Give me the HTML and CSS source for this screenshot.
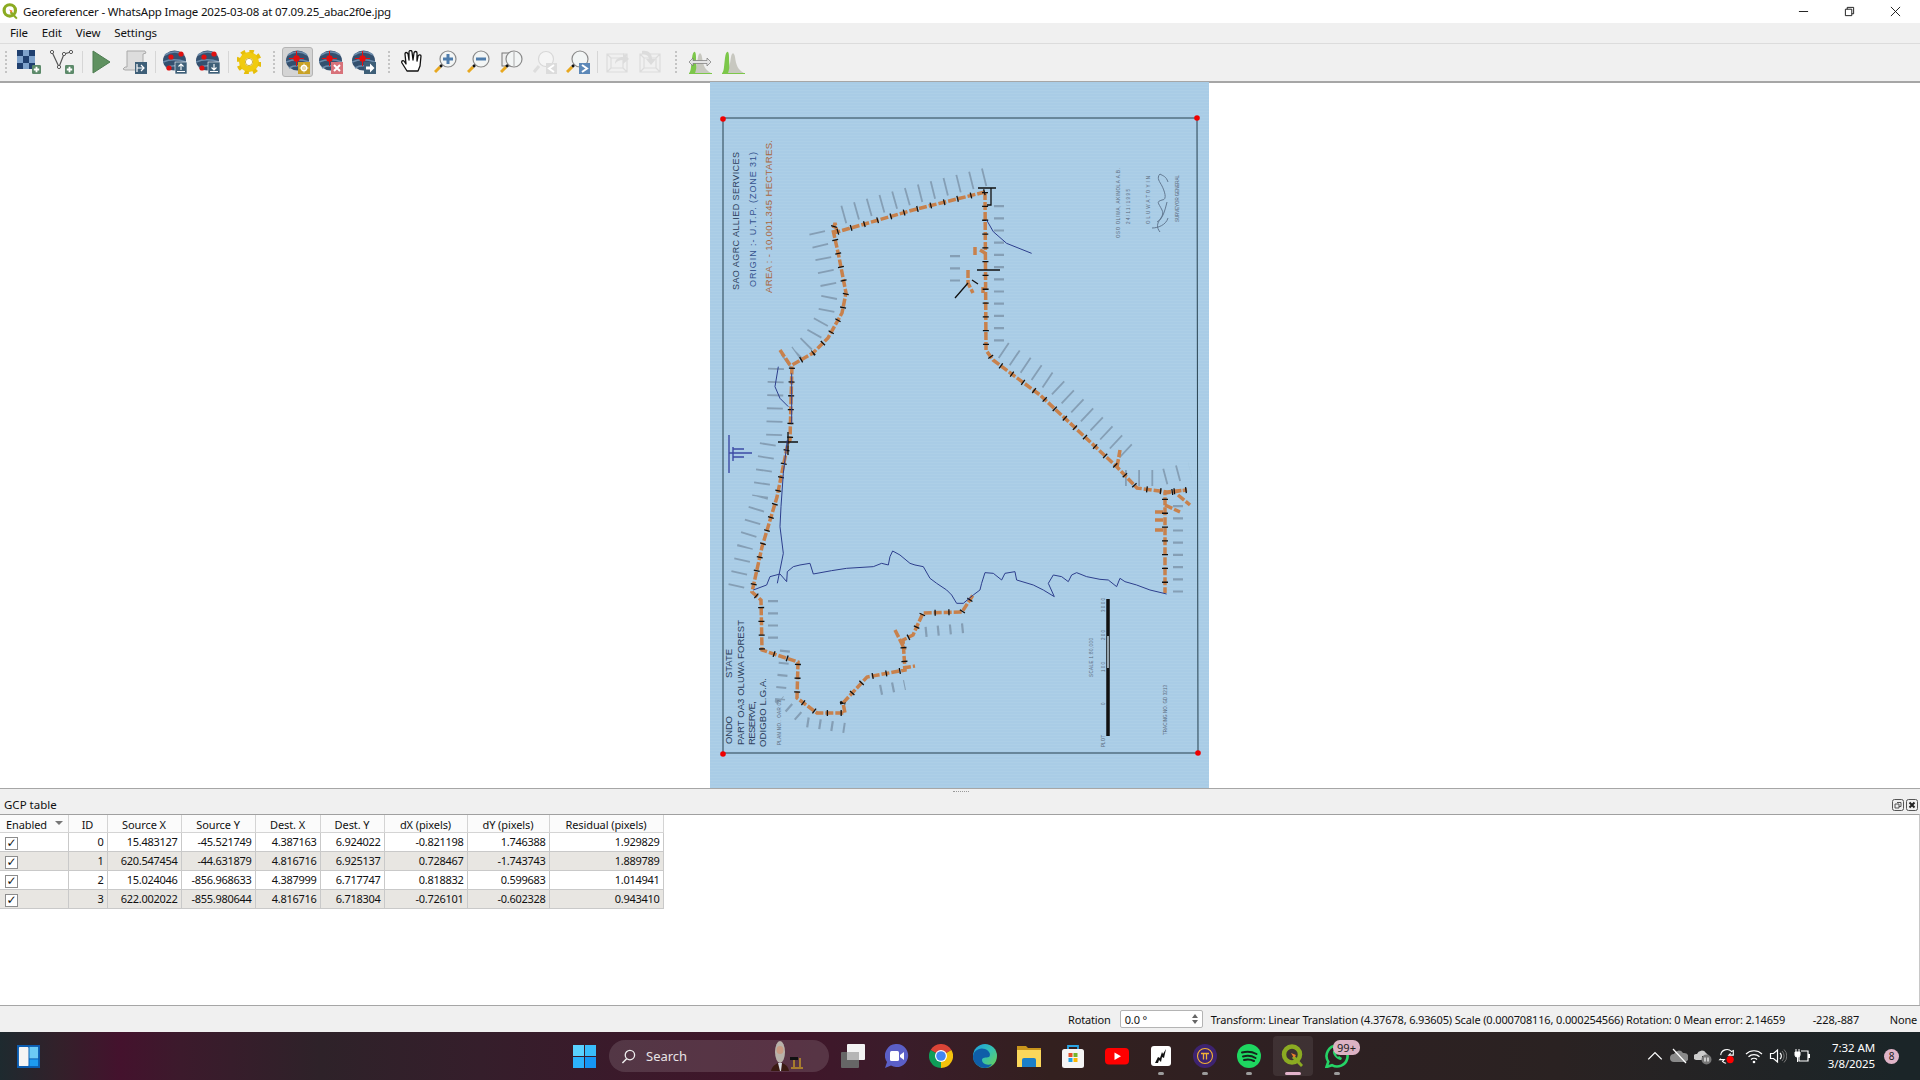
FILE: index.html
```html
<!DOCTYPE html>
<html lang="en">
<head>
    <meta charset="UTF-8">
    <title>Georeferencer - WhatsApp Image 2025-03-08 at 07.09.25_abac2f0e.jpg</title>
    <link rel="stylesheet" href="styles.css">
</head>
<body>

    <svg class="defs" width="0" height="0">
        <defs>
            <symbol id="i-badge-plus" viewBox="0 0 10 10">
                <rect width="10" height="10" rx="1.5" fill="#5c8a6a"/>
                <path d="M5 2v6M2 5h6" stroke="#fff" stroke-width="2"/>
            </symbol>
            <symbol id="i-raster" viewBox="0 0 24 24">
                <rect x="0" y="0" width="18" height="19" fill="#7ea2cc"/>
                <path d="M0 0h6v6H0zM12 0h6v6h-6zM6 6h6v7H6zM0 13h6v6H0zM12 13h6v6h-6z" fill="#1f3f6f"/>
                <use href="#i-badge-plus" x="15" y="15" width="9" height="9"/>
            </symbol>
            <symbol id="i-vector" viewBox="0 0 24 24">
                <path d="M2 2l7 15 5-13 7-2" fill="none" stroke="#555" stroke-width="1.2"/>
                <circle cx="2" cy="2" r="1.6" fill="#fff" stroke="#555"/>
                <circle cx="9" cy="17" r="1.6" fill="#fff" stroke="#555"/>
                <circle cx="14" cy="4" r="1.6" fill="#fff" stroke="#555"/>
                <circle cx="21" cy="2" r="1.6" fill="#fff" stroke="#555"/>
                <use href="#i-badge-plus" x="15" y="15" width="9" height="9"/>
            </symbol>
            <symbol id="i-play" viewBox="0 0 24 24">
                <path d="M3 1l17 11L3 23z" fill="#5f9160" stroke="#4d7c50"/>
            </symbol>
            <symbol id="i-script" viewBox="0 0 24 24">
                <path d="M4 1h18l1 2-3 1v16H2l-2-1 2-2h2z" fill="#ddd" stroke="#aaa"/>
                <rect x="12" y="12" width="12" height="12" fill="#3e5f78"/>
                <path d="M14 18h7m-3-3l3 3-3 3M14 14v8" fill="none" stroke="#fff" stroke-width="1.2"/>
            </symbol>
            <symbol id="i-globe" viewBox="0 0 24 24">
                <ellipse cx="11.5" cy="10.5" rx="11.5" ry="10" fill="#34506f"/>
                <path d="M2 5c6-4 14-4 19 0M0 12c7-3 15-3 23 0M3 18c5-3 12-3 17 0" fill="none" stroke="#6d8cab" stroke-width="1.6"/>
            </symbol>
            <symbol id="i-gcp-up" viewBox="0 0 24 24">
                <use href="#i-globe" width="24" height="24"/>
                <circle cx="8" cy="7" r="2.6" fill="#e01010"/>
                <circle cx="18" cy="4" r="2.6" fill="#e01010"/>
                <circle cx="6" cy="18" r="2.6" fill="#e01010"/>
                <rect x="12" y="12" width="12" height="12" fill="#3e5f78" stroke="#fff" stroke-width=".6"/>
                <path d="M18 20v-6m-2.500 2.500l2.500-2.500 2.500 2.500M14 21.500h8" fill="none" stroke="#fff" stroke-width="1.100"/>
            </symbol>
            <symbol id="i-gcp-down" viewBox="0 0 24 24">
                <use href="#i-globe" width="24" height="24"/>
                <circle cx="8" cy="7" r="2.6" fill="#e01010"/>
                <circle cx="18" cy="4" r="2.6" fill="#e01010"/>
                <circle cx="6" cy="18" r="2.6" fill="#e01010"/>
                <rect x="12" y="12" width="12" height="12" fill="#3e5f78" stroke="#fff" stroke-width=".6"/>
                <path d="M18 14v6m-2.500-2.500l2.500 2.500 2.500-2.500M14 21.500h8" fill="none" stroke="#fff" stroke-width="1.100"/>
            </symbol>
            <symbol id="i-gear" viewBox="0 0 24 24">
                <circle cx="12" cy="12" r="7" fill="none" stroke="#f0cb10" stroke-width="6"/>
                <circle cx="12" cy="12" r="11" fill="none" stroke="#e6be0a" stroke-width="3.500" stroke-dasharray="4.500 4.140"/>
                <circle cx="12" cy="12" r="3.600" fill="#fff" stroke="#c49c08" stroke-width=".8"/>
            </symbol>
            <symbol id="i-target" viewBox="0 0 24 24">
                <use href="#i-globe" width="24" height="24"/>
                <circle cx="10.500" cy="8.500" r="3.200" fill="#e01010"/>
                <path d="M10.500 1v15M3 8.500h15" stroke="#e01010" stroke-width="1"/>
            </symbol>
            <symbol id="i-target-add" viewBox="0 0 24 24">
                <use href="#i-target" width="24" height="24"/>
                <rect x="12" y="12" width="12" height="12" fill="#c9a227"/>
                <circle cx="18" cy="18" r="2.600" fill="none" stroke="#fff" stroke-width="1.500"/>
                <path d="M18 13.500v9M13.500 18h9" stroke="#fff" stroke-width=".8"/>
            </symbol>
            <symbol id="i-target-del" viewBox="0 0 24 24">
                <use href="#i-target" width="24" height="24"/>
                <rect x="12" y="12" width="12" height="12" fill="#d8727a"/>
                <path d="M15 15l6 6m0-6l-6 6" stroke="#fff" stroke-width="2"/>
            </symbol>
            <symbol id="i-target-move" viewBox="0 0 24 24">
                <use href="#i-target" width="24" height="24"/>
                <rect x="12" y="12" width="12" height="12" fill="#3e5f78"/>
                <path d="M14 16.500h4v-3l4.500 4.500-4.500 4.500v-3h-4z" fill="#fff"/>
            </symbol>
            <symbol id="i-hand" viewBox="0 0 24 24">
                <path d="M6 21L1 13c-1-2 1-3 2-2l2 3-1-10c0-2 2-2 3 0l1 6 0-8c0-2 3-2 3 0l1 8 1-7c0-2 3-2 3 0l0 8 1-5c1-2 3-1 3 0l-1 10-2 5z" fill="#fff" stroke="#111" stroke-width="1.300" stroke-linejoin="round"/>
            </symbol>
            <symbol id="i-lens" viewBox="0 0 24 24">
                <circle cx="14" cy="9" r="8" fill="#f2f5f5" stroke="#8a8a8a" stroke-width="1.200"/>
                <path d="M8 15l-2 2" stroke="#111" stroke-width="2.500"/>
                <path d="M6 17l-5 5" stroke="#e8a820" stroke-width="3"/>
            </symbol>
            <symbol id="i-zoom-in" viewBox="0 0 24 24">
                <use href="#i-lens" width="24" height="24"/>
                <path d="M14 4v10M9 9h10" stroke="#4e7cac" stroke-width="3"/>
            </symbol>
            <symbol id="i-zoom-out" viewBox="0 0 24 24">
                <use href="#i-lens" width="24" height="24"/>
                <path d="M9 9h10" stroke="#4e7cac" stroke-width="3"/>
            </symbol>
            <symbol id="i-zoom-layer" viewBox="0 0 24 24">
                <rect x="2" y="3" width="11" height="13" fill="#eee" stroke="#777"/>
                <use href="#i-lens" width="24" height="24"/>
                <path d="M14 2v14" stroke="#aaa"/>
            </symbol>
            <symbol id="i-zoom-last" viewBox="0 0 24 24">
                <circle cx="13" cy="9" r="7.500" fill="#f5f5f5" stroke="#d8d8d8" stroke-width="1.200"/>
                <path d="M6 16l-5 6" stroke="#ddd" stroke-width="3"/>
                <rect x="13" y="13" width="11" height="11" fill="#dcdcdc"/>
                <path d="M21 15l-5 3.500 5 3.500" fill="none" stroke="#fff" stroke-width="2"/>
            </symbol>
            <symbol id="i-zoom-next" viewBox="0 0 24 24">
                <use href="#i-lens" width="24" height="24"/>
                <rect x="13" y="13" width="11" height="11" fill="#5c88b8"/>
                <path d="M16 15l5 3.500-5 3.500" fill="none" stroke="#fff" stroke-width="2"/>
            </symbol>
            <symbol id="i-rotate" viewBox="0 0 24 24">
                <path d="M1 4h20v18H1zM5 8h12v10H5zM1 4l4 4M21 4l-4 4M1 22l4-4M21 22l-4-4" fill="none" stroke="#dcdcdc" stroke-width="1.200"/>
                <path d="M9 14c0-5 4-7 8-7V3l6 6-6 5v-4c-4 0-6 1-8 4z" fill="#dcdcdc"/>
            </symbol>
            <symbol id="i-rotate-down" viewBox="0 0 24 24">
                <path d="M1 4h20v18H1zM5 8h12v10H5zM1 4l4 4M21 4l-4 4M1 22l4-4M21 22l-4-4" fill="none" stroke="#dcdcdc" stroke-width="1.200"/>
                <path d="M3 1c6-1 10 2 10 8h4l-5 6-5-6h3c0-3-3-5-7-5z" fill="#dcdcdc"/>
            </symbol>
            <symbol id="i-hist" viewBox="0 0 24 24">
                <path d="M1 23c2-1 2-7 3-15 1-8 4-8 4-1 0 8 1 14 3 16z" fill="#7cc74a"/>
                <path d="M7 23c1-2 2-10 3-16 1-5 3-5 4 0 1 8 3 13 9 16z" fill="#c8c8c0"/>
                <path d="M1 23.500h23" stroke="#7cc74a"/>
            </symbol>
            <symbol id="i-hist-stretch" viewBox="0 0 24 24">
                <use href="#i-hist" width="24" height="24"/>
                <path d="M1 12l4-4v2.500h14V8l4 4-4 4v-2.500H5V16z" fill="#e4e4e4" stroke="#777" stroke-width=".7"/>
            </symbol>
            <symbol id="i-qgis" viewBox="0 0 24 24">
                <circle cx="11" cy="10.500" r="8" fill="none" stroke="#8bab22" stroke-width="4.500"/>
                <path d="M13 11l9 10-2 2-9-9z" fill="#8bab22"/>
                <path d="M10 9l5 2-2 3z" fill="#ee7d2e"/>
            </symbol>
            <pattern id="paper" width="4" height="3" patternUnits="userSpaceOnUse">
                <rect width="4" height="1" fill="#ffffff" fill-opacity=".05"/>
            </pattern>
            <linearGradient id="edge-g" x1="0" y1="0" x2="1" y2="1">
                <stop offset="0" stop-color="#1b9de2"/>
                <stop offset=".5" stop-color="#35c1b1"/>
                <stop offset="1" stop-color="#6fd14c"/>
            </linearGradient>
        </defs>
    </svg>

    <div class="titlebar">
        <svg class="app-icon" viewBox="0 0 24 24"><use href="#i-qgis"/></svg>
        <span class="title-text">Georeferencer - WhatsApp Image 2025-03-08 at 07.09.25_abac2f0e.jpg</span>
        <div class="win-controls">
            <span class="win-btn"><svg viewBox="0 0 12 12" class="win-ico"><path d="M1 6h10"/></svg></span>
            <span class="win-btn"><svg viewBox="0 0 12 12" class="win-ico"><path d="M1.500 3.500h7v7h-7zM3.500 3.500v-2h7v7h-2"/></svg></span>
            <span class="win-btn"><svg viewBox="0 0 12 12" class="win-ico"><path d="M1 1l10 10M11 1L1 11"/></svg></span>
        </div>
    </div>

    <div class="menubar">
        <span class="menu-item">File</span>
        <span class="menu-item">Edit</span>
        <span class="menu-item">View</span>
        <span class="menu-item">Settings</span>
    </div>

    <div class="toolbar">
        <span class="handle handle-first"></span>
        <span class="tool"><svg><use href="#i-raster"/></svg></span>
        <span class="tool"><svg><use href="#i-vector"/></svg></span>
        <span class="sep"></span>
        <span class="tool"><svg><use href="#i-play"/></svg></span>
        <span class="tool"><svg><use href="#i-script"/></svg></span>
        <span class="sep"></span>
        <span class="tool"><svg><use href="#i-gcp-up"/></svg></span>
        <span class="tool"><svg><use href="#i-gcp-down"/></svg></span>
        <span class="sep"></span>
        <span class="tool"><svg><use href="#i-gear"/></svg></span>
        <span class="handle"></span>
        <span class="tool active"><svg><use href="#i-target-add"/></svg></span>
        <span class="tool"><svg><use href="#i-target-del"/></svg></span>
        <span class="tool"><svg><use href="#i-target-move"/></svg></span>
        <span class="handle"></span>
        <span class="tool"><svg><use href="#i-hand"/></svg></span>
        <span class="tool"><svg><use href="#i-zoom-in"/></svg></span>
        <span class="tool"><svg><use href="#i-zoom-out"/></svg></span>
        <span class="tool"><svg><use href="#i-zoom-layer"/></svg></span>
        <span class="tool"><svg><use href="#i-zoom-last"/></svg></span>
        <span class="tool"><svg><use href="#i-zoom-next"/></svg></span>
        <span class="sep"></span>
        <span class="tool"><svg><use href="#i-rotate"/></svg></span>
        <span class="tool"><svg><use href="#i-rotate-down"/></svg></span>
        <span class="handle"></span>
        <span class="tool"><svg><use href="#i-hist-stretch"/></svg></span>
        <span class="tool"><svg><use href="#i-hist"/></svg></span>
    </div>

    <div class="canvas">
        <svg class="map" viewBox="0 82 1920 706">
            <rect class="paper" x="710" y="82" width="499" height="706"/>
            <rect x="710" y="82" width="499" height="706" fill="url(#paper)"/>
            <path class="frame" d="M723 118H1197L1198 753H723z"/>

            <!-- labels next to the boundary -->
            <polyline class="labels l18" points="985,177 913,195 842,215"/>
            <polyline class="labels l16" points="817,232 823,257 830,293 826,313 812,338 797,353 780,365"/>
            <polyline class="labels l16" points="776,368 774,440 768,443 760,497 745,547 735,592"/>
            <polyline class="labels l10" points="999,205 999,350"/>
            <polyline class="labels l18" points="1003,350 1055,385 1130,455"/>
            <polyline class="labels l16" points="1125,478 1160,478 1190,470"/>
            <polyline class="labels l10" points="773,600 773,640"/>
            <polyline class="labels l10" points="785,650 780,700 805,722 845,728"/>
            <polyline class="labels l10" points="880,690 905,685"/>
            <polyline class="labels l10" points="925,632 965,628"/>
            <polyline class="labels l10" points="1178,505 1178,593"/>
            <polyline class="labels l10" points="955,255 955,285"/>

            <!-- boundary -->
            <polyline class="bound" points="985,192 913,210 837,232 835,223 833,230 839,257 846,293 842,313 828,338 813,353 792,365 790,440 788,443 777,497 762,547 752,592 761,600 762,650 798,662 797,698 817,713 845,713 843,703 867,677 905,670 903,640 913,635 923,613 962,612 973,595"/>
            <polyline class="bound" points="985,192 986,350 993,360 1040,395 1117,467 1137,488 1167,492 1187,490 1165,493 1165,593"/>
            <polyline class="bound" points="975,247 975,257"/>
            <polyline class="bound" points="980,250 985,253"/>
            <polyline class="bound" points="968,270 968,283 973,293"/>
            <polyline class="bound" points="983,287 983,293"/>
            <polyline class="bound" points="895,630 905,650"/>
            <polyline class="bound" points="903,668 915,666"/>
            <polyline class="bound" points="1155,512 1165,512"/>
            <polyline class="bound" points="1155,520 1165,520"/>
            <polyline class="bound" points="1155,530 1165,530"/>
            <polyline class="bound" points="1165,505 1180,512"/>
            <polyline class="bound" points="1178,495 1190,505"/>
            <polyline class="bound" points="1117,467 1120,450"/>
            <polyline class="bound" points="780,350 790,365"/>
            <polyline class="ticks" points="985,192 913,210 837,232 835,223 833,230 839,257 846,293 842,313 828,338 813,353 792,365 790,440 788,443 777,497 762,547 752,592 761,600 762,650 798,662 797,698 817,713 845,713 843,703 867,677 905,670 903,640 913,635 923,613 962,612 973,595"/>
            <polyline class="ticks" points="985,192 986,350 993,360 1040,395 1117,467 1137,488 1167,492 1187,490 1165,493 1165,593"/>
            <path class="ink" d="M978 188H996M991 188V205H987M778 442H798M788 432V455M977 270H1000M972 280L978 284M968 283L955 298"/>

            <!-- rivers, traced at 3x -->
            <g transform="translate(700 440) scale(.3333)">
                <polyline class="river" points="1400,462 1350,450 1310,435 1275,425 1260,415 1250,440 1225,420 1200,418 1160,410 1130,398 1115,405 1105,425 1085,410 1060,405 1045,430 1063,470 1030,450 1000,435 950,420 945,395 915,400 905,420 880,400 855,398 845,430 840,450 820,465 790,490 770,490 755,465 740,450 710,430 690,415 670,380 645,375 630,370 600,345 578,333 570,350 565,375 545,370 520,380 440,385 395,392 340,402 330,370 300,375 280,380 262,395 260,425 240,402 210,410 200,435 160,450"/>
                <polyline class="river" points="262,0 250,100 243,200 240,260 250,340 232,430"/>
                <polyline class="river" points="275,-200 275,-50"/>
                <polyline class="river" points="235,-220 225,-160 240,-125 265,-100"/>
                <polyline class="river" points="860,-660 880,-625 920,-590 995,-560"/>
            </g>

            <!-- sheet text -->
            <text class="sheet t-navy" transform="translate(739 290) rotate(-90)" textLength="138">SAO AGRC ALLIED SERVICES</text>
            <text class="sheet t-blue" transform="translate(756 287) rotate(-90)" textLength="135">ORIGIN :- U.T.P. (ZONE 31)</text>
            <text class="sheet t-brown" transform="translate(772 293) rotate(-90)" textLength="153">AREA : - 10,001.345 HECTARES.</text>
            <text class="sheet-big t-navy" transform="translate(732 744) rotate(-90)" textLength="28">ONDO</text>
            <text class="sheet-big t-navy" transform="translate(732 678) rotate(-90)" textLength="29">STATE</text>
            <text class="sheet-big t-navy" transform="translate(744 745) rotate(-90)" textLength="125">PART OA3 OLUWA FOREST</text>
            <text class="sheet-big t-navy" transform="translate(755 745) rotate(-90)" textLength="44">RESERVE,</text>
            <text class="sheet-big t-navy" transform="translate(766 747) rotate(-90)" textLength="69">ODIGBO L.G.A.</text>
            <text class="sheet-small" transform="translate(781 745) rotate(-90)" textLength="45">PLAN NO.: OAR 02</text>
            <text class="sheet-small" transform="translate(1093 677) rotate(-90)" textLength="39">SCALE 1:80,000</text>
            <text class="sheet-small" transform="translate(1167 735) rotate(-90)" textLength="50">TRACING NO. GD 3213</text>
            <text class="sheet-small" transform="translate(1105 612) rotate(-90)" textLength="14">3000</text>
            <text class="sheet-small" transform="translate(1105 640) rotate(-90)" textLength="10">200</text>
            <text class="sheet-small" transform="translate(1105 672) rotate(-90)" textLength="10">100</text>
            <text class="sheet-small" transform="translate(1105 705) rotate(-90)" textLength="4">0</text>
            <text class="sheet-small" transform="translate(1105 747) rotate(-90)" textLength="12">PLOT</text>
            <text class="sheet-small" transform="translate(1120 238) rotate(-90)" textLength="70">OSO OLIWA, AKINOLA A.B.</text>
            <text class="sheet-small" transform="translate(1130 224) rotate(-90)" textLength="35">24/11/1995</text>
            <text class="sheet-small" transform="translate(1150 224) rotate(-90)" textLength="48">OLUWATOYIN</text>
            <text class="sheet-small" transform="translate(1179 222) rotate(-90)" textLength="47">SURVEYOR GENERAL</text>
            <path class="sign" d="M1160 232c-8-10 6-14 2-22s-6-8 0-10c6 0 2-10 0-14s-6-8-2-12c3 2 6 2 8 8M1157 222c6-3 8-12 10-20M1152 228c6 0 14-3 16-10"/>

            <!-- north arrow, scale bar -->
            <path class="north" d="M729 435V473M729 453H752M733 449H744M733 457H744M733 447V461"/>
            <path class="scale-bar" d="M1108 599V736"/>
            <path class="scale-gap" d="M1108 636V668"/>

            <circle class="gcp" cx="723" cy="119" r="2.800"/>
            <circle class="gcp" cx="1197" cy="118" r="2.800"/>
            <circle class="gcp" cx="723" cy="754" r="2.800"/>
            <circle class="gcp" cx="1198" cy="753" r="2.800"/>
        </svg>
    </div>

    <div class="dock">
        <div class="dock-title">
            <span>GCP table</span>
            <span class="grip"></span>
            <div class="dock-btns">
                <svg class="dock-ico" viewBox="0 0 12 12"><rect x=".5" y=".5" width="11" height="11" rx="2"/><path d="M5 3.500h4v4H7M3 5h4v4H3z"/></svg>
                <svg class="dock-ico" viewBox="0 0 12 12"><rect x=".5" y=".5" width="11" height="11" rx="2"/><path class="dock-x" d="M3.500 3.500l5 5m0-5l-5 5"/></svg>
            </div>
        </div>
        <div class="table-wrap">
            <table class="gcp-table">
                <colgroup>
                    <col class="c-en"><col class="c-id"><col class="c-sx"><col class="c-sy"><col class="c-dx"><col class="c-dy"><col class="c-px"><col class="c-py"><col class="c-res">
                </colgroup>
                <thead>
                    <tr>
                        <th class="th-enabled"><span class="th-inner">Enabled<i class="sort"></i></span></th>
                        <th>ID</th><th>Source X</th><th>Source Y</th><th>Dest. X</th><th>Dest. Y</th><th>dX (pixels)</th><th>dY (pixels)</th><th>Residual (pixels)</th>
                    </tr>
                </thead>
                <tbody>
                    <tr>
                        <td class="chk"><span class="checkbox">&#10003;</span></td>
                        <td>0</td><td>15.483127</td><td>-45.521749</td><td>4.387163</td><td>6.924022</td><td>-0.821198</td><td>1.746388</td><td>1.929829</td>
                    </tr>
                    <tr>
                        <td class="chk"><span class="checkbox">&#10003;</span></td>
                        <td>1</td><td>620.547454</td><td>-44.631879</td><td>4.816716</td><td>6.925137</td><td>0.728467</td><td>-1.743743</td><td>1.889789</td>
                    </tr>
                    <tr>
                        <td class="chk"><span class="checkbox">&#10003;</span></td>
                        <td>2</td><td>15.024046</td><td>-856.968633</td><td>4.387999</td><td>6.717747</td><td>0.818832</td><td>0.599683</td><td>1.014941</td>
                    </tr>
                    <tr>
                        <td class="chk"><span class="checkbox">&#10003;</span></td>
                        <td>3</td><td>622.002022</td><td>-855.980644</td><td>4.816716</td><td>6.718304</td><td>-0.726101</td><td>-0.602328</td><td>0.943410</td>
                    </tr>
                </tbody>
            </table>
        </div>
    </div>

    <div class="statusbar">
        <span class="st-rot">Rotation</span>
        <span class="spin"><span class="spin-val">0.0 °</span><span class="spin-arrows"><i class="up"></i><i class="down"></i></span></span>
        <span class="st-msg">Transform: Linear Translation (4.37678, 6.93605) Scale (0.000708116, 0.000254566) Rotation: 0 Mean error: 2.14659</span>
        <span class="st-coord">-228,-887</span>
        <span class="st-none">None</span>
    </div>

    <div class="taskbar">
        <span class="widgets"><svg viewBox="0 0 24 24"><rect width="24" height="24" fill="#0a5cb0"/><rect x="2" y="2" width="10" height="20" rx="1" fill="#f4f4f4"/><rect x="13" y="2" width="9" height="12" fill="#6ccbf5"/><rect x="13" y="15" width="9" height="7" fill="#1d9bf0"/></svg></span>

        <span class="start"><svg viewBox="0 0 24 24"><path d="M0 0h11.500v11.500H0z" fill="#59d2ff"/><path d="M12.500 0H24v11.500H12.500z" fill="#39bdfb"/><path d="M0 12.500h11.500V24H0z" fill="#2cb2fb"/><path d="M12.500 12.500H24V24H12.500z" fill="#1596f5"/></svg></span>

        <span class="search">
            <svg class="search-ico" viewBox="0 0 16 16"><circle cx="9.500" cy="6.500" r="5" fill="none" stroke="#eee" stroke-width="1.400"/><path d="M6 10.500L1.500 15" stroke="#eee" stroke-width="1.600"/></svg>
            <span class="search-text">Search</span>
            <svg class="search-art" viewBox="0 0 32 32">
                <path d="M0 31c1-5 5-7 7-8h4c3 1 6 3 7 8z" fill="#3a1a12"/>
                <path d="M7 23l2 8h1l1-8z" fill="#d8dbe4"/>
                <ellipse cx="9" cy="12" rx="5" ry="11" fill="#b8b2aa"/>
                <ellipse cx="9" cy="10" rx="3.500" ry="4" fill="#c99c84"/>
                <path d="M20 27h12v2H20zM22 20h2v7h-2zM28 18h2v9h-2z" fill="#a67c2e"/>
                <path d="M19 17h8v3h-8z" fill="#111"/>
            </svg>
        </span>

        <div class="apps">
            <span class="app"><svg viewBox="0 0 24 24"><rect x="0" y="8" width="18" height="16" rx="1" fill="#666"/><rect x="6" y="0" width="18" height="16" rx="1" fill="#f2f2f2"/><rect x="6" y="8" width="12" height="8" fill="#b5b5b5"/></svg></span>
            <span class="app"><svg viewBox="0 0 24 24"><path d="M12 0a11.500 11.500 0 1 1-6 21.500L0 24l2-6A11.500 11.500 0 0 1 12 0z" fill="#5b5fc7"/><rect x="5" y="7" width="9" height="10" rx="1.500" fill="#fff"/><path d="M15 11l4-3v8l-4-3z" fill="#fff"/></svg></span>
            <span class="app"><svg viewBox="0 0 24 24"><path d="M12 12L1.600 6A12 12 0 0 1 22.400 6z" fill="#db4437"/><path d="M12 12L22.400 6A12 12 0 0 1 12 24z" fill="#f4c20d"/><path d="M12 12L12 24A12 12 0 0 1 1.600 6z" fill="#0f9d58"/><circle cx="12" cy="12" r="6" fill="#fff"/><circle cx="12" cy="12" r="4.800" fill="#4285f4"/></svg></span>
            <span class="app"><svg viewBox="0 0 24 24"><circle cx="12" cy="12" r="12" fill="url(#edge-g)"/><path d="M0 13C0 7 6 3 12 5c5 2 6 6 4 8-3 1-7 0-7 3s4 6 10 4c-2 3-5 4-7 4-6 0-12-5-12-11z" fill="#0f5ea8"/></svg></span>
            <span class="app"><svg viewBox="0 0 24 24"><path d="M0 2h9l2 2h13v19H0z" fill="#c9951c"/><path d="M0 6h24v17H0z" fill="#fbd75b"/><path d="M7 14h10a2 2 0 0 1 2 2v7H5v-7a2 2 0 0 1 2-2z" fill="#1b7fc9"/></svg></span>
            <span class="app"><svg viewBox="0 0 24 24"><path d="M7 6V2h10v4" fill="none" stroke="#2aa6e6" stroke-width="1.800"/><rect x="1" y="5" width="22" height="19" rx="2.500" fill="#f5f5f5"/><rect x="7.500" y="9" width="4" height="4" fill="#e5502a"/><rect x="12.500" y="9" width="4" height="4" fill="#74b52d"/><rect x="7.500" y="14" width="4" height="4" fill="#1ea1e8"/><rect x="12.500" y="14" width="4" height="4" fill="#fbb800"/></svg></span>
            <span class="app"><svg viewBox="0 0 24 24"><rect y="4" width="24" height="16.500" rx="4" fill="#f00"/><path d="M9.500 8.500l6.500 3.700-6.500 3.700z" fill="#fff"/></svg></span>
            <span class="app running"><svg viewBox="0 0 24 24"><rect x="2" y="2" width="20" height="20" rx="3" fill="#fff"/><path d="M6 19l3-6 2 1 2-6 1 2 3-5-2 9-2-1-1 5-2-2-1 3z" fill="#111"/></svg></span>
            <span class="app running"><svg viewBox="0 0 24 24"><circle cx="12" cy="12" r="12" fill="#3d2370"/><circle cx="12" cy="12" r="7.500" fill="none" stroke="#f2b134" stroke-width="1.100"/><path d="M8 9.500h8M10.500 9.500v6M13.500 9.500v6" fill="none" stroke="#f2b134" stroke-width="1.300"/></svg></span>
            <span class="app running"><svg viewBox="0 0 24 24"><circle cx="12" cy="12" r="12" fill="#1ed760"/><path d="M5 8.500c5-1.500 10-1 14.500 1.500M6 12.500c4-1 9-.7 12.500 1.500M7 16c3.500-1 7-.6 10 1" fill="none" stroke="#15241c" stroke-width="2" stroke-linecap="round"/></svg></span>
            <span class="app current"><svg viewBox="0 0 24 24"><use href="#i-qgis"/></svg></span>
            <span class="app running"><svg viewBox="0 0 24 24"><path d="M12 1.500a10.500 10.500 0 1 1-5 19.700L1.500 23l1.800-5.200A10.500 10.500 0 0 1 12 1.500z" fill="none" stroke="#25d366" stroke-width="2.600"/><path d="M8 7c-1 3 4 9 8 9l1-2-3-2-1 1-2-2 1-1-2-3z" fill="#25d366"/></svg><span class="app-badge">99+</span></span>
        </div>

        <div class="tray">
            <span class="tray-item"><svg viewBox="0 0 16 16"><path class="tray-line" d="M2 11l6-6 6 6"/></svg></span>
            <span class="tray-item"><svg viewBox="0 0 18 18"><path d="M4 15a4 4 0 0 1 0-8 5 5 0 0 1 9-1 4.500 4.500 0 0 1 2 9z" fill="#8a8a8a"/><path class="tray-line" d="M3 2l13 14"/></svg></span>
            <span class="tray-item"><svg viewBox="0 0 18 18"><path d="M2 13a3 3 0 0 1 1-6 5 5 0 0 1 9-1 3.500 3.500 0 0 1 2 3H8v4z" fill="#ccc"/><circle cx="12.500" cy="12.500" r="5" fill="#777"/><path d="M11 10.500v4M14 10.500v4" stroke="#fff" stroke-width="1.200"/></svg></span>
            <span class="tray-item"><svg viewBox="0 0 20 20"><path class="tray-line" d="M3 9a7 7 0 0 1 12-4l2-1v5h-5l2-2M3 13l-1 1 5 0-2 2c1 1 2 2 4 2"/><circle cx="13.500" cy="14" r="4" fill="#f00"/></svg></span>
            <span class="tray-item tray-wifi"><svg viewBox="0 0 18 18"><path class="tray-line" d="M1 7a11.500 11.500 0 0 1 16 0M3.500 9.800a8 8 0 0 1 11 0M6 12.500a4.300 4.300 0 0 1 6 0"/><circle cx="9" cy="15" r="1.300" fill="#fff"/></svg></span>
            <span class="tray-item"><svg viewBox="0 0 18 18"><path class="tray-line" d="M1.500 6.500h3l4-3.500v12l-4-3.500h-3z"/><path class="tray-line" d="M11 6a4 4 0 0 1 0 6"/><path class="tray-dim" d="M13 4a7 7 0 0 1 0 10M15 2.500a9 9 0 0 1 0 13"/></svg></span>
            <span class="tray-item"><svg viewBox="0 0 18 18"><path class="tray-line" d="M8 4h7v10H6V9"/><path d="M15 7h2v4h-2z" fill="#fff"/><path d="M2 5h5v3a2 2 0 0 1-2 2H4a2 2 0 0 1-2-2zM3 2v3M6 2v3M4.500 10v5" fill="#fff" stroke="#fff"/></svg></span>
        </div>

        <div class="clock">
            <span>7:32 AM</span>
            <span>3/8/2025</span>
        </div>
        <span class="notif">8</span>
    </div>

</body>
</html>
```

FILE: styles.css
```css
html, body {
    margin: 0;
    height: 100%;
}
body {
    width: 1920px;
    height: 1080px;
    display: flex;
    flex-direction: column;
    overflow: hidden;
    font-family: "Noto Sans", "Open Sans", sans-serif;
    font-size: 11px;
    color: #111;
    background: #f0f0f0;
}
.defs {
    position: absolute;
}

/* title bar */
.titlebar {
    height: 23px;
    display: flex;
    align-items: center;
    background: #fff;
    padding-left: 2px;
    flex: none;
}
.app-icon {
    width: 17px;
    height: 17px;
}
.title-text {
    margin-left: 4px;
    font-size: 11.500px;
    letter-spacing: -0.19px;
    white-space: nowrap;
}
.win-controls {
    margin-left: auto;
    margin-right: 2px;
    display: flex;
}
.win-btn {
    width: 46px;
    height: 23px;
    display: flex;
    align-items: center;
    justify-content: center;
}
.win-ico {
    width: 11px;
    height: 11px;
    fill: none;
    stroke: #111;
    stroke-width: 1;
}

/* menu */
.menubar {
    height: 18px;
    padding-bottom: 2px;
    flex: none;
    display: flex;
    align-items: center;
    gap: 14px;
    padding-left: 10px;
    background: #f0f0f0;
    font-size: 11.500px;
    letter-spacing: -0.15px;
}

/* toolbar */
.toolbar {
    height: 36px;
    padding-bottom: 1px;
    flex: none;
    display: flex;
    align-items: center;
    background: #f0f0f0;
    border-top: 1px solid #dcdcdc;
    border-bottom: 1px solid #a6a6a6;
}
.tool {
    width: 33px;
    height: 30px;
    display: flex;
    align-items: center;
    justify-content: center;
    box-sizing: border-box;
    flex: none;
}
.tool svg {
    width: 24px;
    height: 24px;
}
.tool.active {
    width: 31px;
    margin: 0 1px;
    background: #d4d4d4;
    border: 1px solid #b4b4b4;
    border-radius: 3px;
}
.handle {
    width: 2px;
    height: 22px;
    flex: none;
    margin: 0 6.500px 0 7.500px;
    border-left: 2px dotted #c4c4c4;
    box-sizing: border-box;
}
.handle-first {
    margin: 0 6px 0 4.500px;
}
.sep {
    width: 1px;
    height: 22px;
    flex: none;
    margin: 0 3.100px;
    background: #d6d6d6;
}

/* map canvas */
.canvas {
    height: 706px;
    flex: none;
    background: #fff;
    border-top: 1px solid #a6a6a6;
    box-sizing: border-box;
}
.map {
    display: block;
    width: 1920px;
    height: 706px;
    margin-top: -1px;
}
.paper {
    fill: #a9cce6;
}
.frame {
    fill: none;
    stroke: #26404f;
    stroke-width: 1;
}
.labels {
    fill: none;
    stroke: #66788c;
    stroke-opacity: 0.55;
    stroke-dasharray: 1.800 11.400;
}
.l18 { stroke-width: 18; }
.l16 { stroke-width: 16; }
.l10 { stroke-width: 10; stroke-dasharray: 2.200 10; }
.bound {
    fill: none;
    stroke: #c8814c;
    stroke-width: 3.500;
    stroke-dasharray: 8 2;
}
.ticks {
    fill: none;
    stroke: #111;
    stroke-width: 6;
    stroke-dasharray: 1.300 12.500;
}
.ink {
    fill: none;
    stroke: #111;
    stroke-width: 1.300;
}
.river {
    fill: none;
    stroke: #2c3d8c;
    stroke-width: 3;
    stroke-linejoin: round;
}
.sheet {
    font-family: "Liberation Sans", Arial, sans-serif;
    font-size: 9px;
}
.sheet-big {
    font-family: "Liberation Sans", Arial, sans-serif;
    font-size: 9.500px;
}
.sheet-small {
    font-family: "Liberation Sans", Arial, sans-serif;
    font-size: 4.500px;
    fill: #59697c;
}
.t-navy { fill: #2d3f5c; }
.t-blue { fill: #33508c; }
.t-brown { fill: #a9683f; font-size: 9.500px; }
.sign {
    fill: none;
    stroke: #5a6f88;
    stroke-width: 0.900;
}
.north {
    fill: none;
    stroke: #3d4ba5;
    stroke-width: 1.400;
}
.scale-bar {
    fill: none;
    stroke: #111;
    stroke-width: 3.500;
}
.scale-gap {
    fill: none;
    stroke: #c4d8e4;
    stroke-width: 1.500;
}
.gcp {
    fill: #f00000;
}

/* gcp dock */
.dock {
    height: 217px;
    flex: none;
    display: flex;
    flex-direction: column;
    border-top: 1px solid #a6a6a6;
    box-sizing: border-box;
    background: #f0f0f0;
    position: relative;
}
.dock-title {
    height: 25px;
    flex: none;
    display: flex;
    align-items: center;
    padding-left: 4px;
    box-sizing: border-box;
    font-size: 11.500px;
    padding-top: 6px;
}
.grip {
    position: absolute;
    left: 953px;
    top: 2px;
    width: 16px;
    border-top: 1px dotted #999;
}
.dock-btns {
    margin-left: auto;
    display: flex;
    gap: 2px;
    padding-right: 2px;
}
.dock-ico {
    width: 12px;
    height: 12px;
    fill: none;
    stroke: #555;
    stroke-width: 1;
}
.dock-x {
    stroke: #222;
    stroke-width: 2;
}
.table-wrap {
    flex: 1;
    background: #fff;
    border-top: 1px solid #a0a0a0;
    border-right: 1px solid #c8c8c8;
    border-left: 1px solid #c8c8c8;
    margin-left: -1px;
    overflow: hidden;
}
.gcp-table {
    border-collapse: collapse;
    table-layout: fixed;
    width: 663px;
    font-size: 11px;
    letter-spacing: -0.28px;
}
.c-en { width: 68px; }
.c-id { width: 39px; }
.c-sx { width: 74px; }
.c-sy { width: 74px; }
.c-dx { width: 65px; }
.c-dy { width: 64px; }
.c-px { width: 83px; }
.c-py { width: 82px; }
.c-res { width: 114px; }
.gcp-table th {
    height: 16px;
    padding: 1px 0 0;
    font-weight: normal;
    text-align: center;
    letter-spacing: -0.1px;
    line-height: 15px;
    background: #fbfbfb;
    border-right: 1px solid #d4d4d4;
    border-bottom: 1px solid #d4d4d4;
}
.gcp-table td {
    height: 17px;
    padding: 0 3px 1px 0;
    text-align: right;
    line-height: 15px;
    border-right: 1px solid #c9c9c9;
    border-bottom: 1px solid #c9c9c9;
    white-space: nowrap;
}
.gcp-table tbody tr:nth-child(even) td {
    background: #e8e6e2;
}
.th-inner {
    display: flex;
    justify-content: space-between;
    align-items: center;
    padding: 0 5px 0 6px;
}
.sort {
    width: 0;
    height: 0;
    border-left: 4px solid transparent;
    border-right: 4px solid transparent;
    border-top: 4px solid #777;
    margin-bottom: 3px;
}
.gcp-table td.chk {
    text-align: left;
    height: 18px;
    padding: 0 0 0 5px;
}
.checkbox {
    display: inline-flex;
    width: 13px;
    height: 13px;
    align-items: center;
    justify-content: center;
    background: #fff;
    border: 1px solid #8c8c8c;
    box-sizing: border-box;
    font-size: 12px;
    font-weight: bold;
    line-height: 1;
    font-family: "DejaVu Sans", sans-serif;
    vertical-align: middle;
}

/* status bar */
.statusbar {
    height: 27px;
    flex: none;
    display: flex;
    align-items: center;
    background: #f0f0f0;
    border-top: 1px solid #a6a6a6;
    box-sizing: border-box;
    font-size: 11px;
    letter-spacing: -0.15px;
    white-space: nowrap;
}
.st-rot {
    margin-left: 1068px;
}
.spin {
    margin-left: 9px;
    width: 83px;
    height: 18px;
    display: flex;
    justify-content: space-between;
    align-items: center;
    background: #fff;
    border: 1px solid #b4b4b4;
    border-radius: 2px;
    box-sizing: border-box;
    padding-left: 4px;
}
.spin-arrows {
    display: flex;
    flex-direction: column;
    gap: 2px;
    padding: 0 4px;
}
.spin-arrows i {
    width: 0;
    height: 0;
    border-left: 3.500px solid transparent;
    border-right: 3.500px solid transparent;
}
.spin-arrows .up {
    border-bottom: 4px solid #666;
}
.spin-arrows .down {
    border-top: 4px solid #666;
}
.st-msg {
    margin-left: 8px;
    width: 602px;
    flex: none;
}
.st-coord {
    width: 77px;
    flex: none;
}
.st-none {
    flex: none;
}

/* taskbar */
.taskbar {
    height: 48px;
    flex: none;
    display: flex;
    align-items: center;
    color: #fff;
    background: linear-gradient(90deg, #1e2a2f 0, #33202a 60px, #44122d 120px, #3c1a2c 180px, #2e2229 320px, #351e2b 480px, #41152a 780px, #3a1c2a 900px, #33201f 1050px, #2f2022 1250px, #2a2222 1560px, #1b2528 1900px);
    font-family: "Noto Sans", "Open Sans", sans-serif;
}
.widgets {
    width: 23px;
    height: 23px;
    margin-left: 17px;
    flex: none;
}
.widgets svg,
.start svg {
    display: block;
    width: 100%;
    height: 100%;
}
.start {
    width: 23px;
    height: 23px;
    margin-left: 533px;
    flex: none;
}
.search {
    width: 220px;
    height: 32px;
    margin-left: 13px;
    flex: none;
    display: flex;
    align-items: center;
    border-radius: 16px;
    background: rgba(255, 255, 255, 0.13);
    box-sizing: border-box;
    padding-left: 12px;
    font-size: 13px;
    position: relative;
    overflow: hidden;
}
.search-ico {
    width: 15px;
    height: 17px;
}
.search-text {
    margin-left: 10px;
    color: #e8e4e6;
}
.search-art {
    position: absolute;
    right: 26px;
    top: 0;
    width: 32px;
    height: 32px;
}
.apps {
    display: flex;
    margin-left: 2px;
}
.app {
    width: 44px;
    height: 48px;
    display: flex;
    align-items: center;
    justify-content: center;
    position: relative;
}
.app svg {
    width: 24px;
    height: 24px;
    margin-top: -1px;
}
.app.running::after,
.app.current::after {
    content: "";
    position: absolute;
    bottom: 5px;
    left: 19px;
    width: 6px;
    height: 3px;
    border-radius: 2px;
    background: #9c9c9c;
}
.app.current::before {
    content: "";
    position: absolute;
    left: 2px;
    top: 4px;
    width: 40px;
    height: 40px;
    border-radius: 4px;
    background: rgba(255, 255, 255, 0.08);
}
.app.current::after {
    left: 14px;
    width: 16px;
    background: #e3b3cb;
}
.app.current svg {
    position: relative;
}
.app-badge {
    position: absolute;
    left: 18px;
    top: 8px;
    width: 27px;
    height: 15px;
    border-radius: 7px;
    background: #dcb2c3;
    color: #222;
    font-size: 11px;
    line-height: 15px;
    text-align: center;
}
.tray {
    margin-left: 284px;
    display: flex;
}
.tray-item {
    width: 24px;
    height: 24px;
    display: flex;
    align-items: center;
    justify-content: center;
}
.tray-item svg {
    width: 18px;
    height: 18px;
}
.tray-wifi {
    margin-left: 3px;
}
.tray-line {
    fill: none;
    stroke: #fff;
    stroke-width: 1.200;
}
.tray-dim {
    fill: none;
    stroke: #777;
    stroke-width: 1;
}
.clock {
    margin-left: 13px;
    width: 48px;
    display: flex;
    flex-direction: column;
    align-items: flex-end;
    font-size: 11.500px;
    line-height: 16px;
    white-space: nowrap;
    letter-spacing: -0.1px;
}
.notif {
    margin-left: 9px;
    width: 15px;
    height: 15px;
    border-radius: 50%;
    background: #e0b4c8;
    color: #222;
    font-size: 10px;
    line-height: 15px;
    text-align: center;
}
```
